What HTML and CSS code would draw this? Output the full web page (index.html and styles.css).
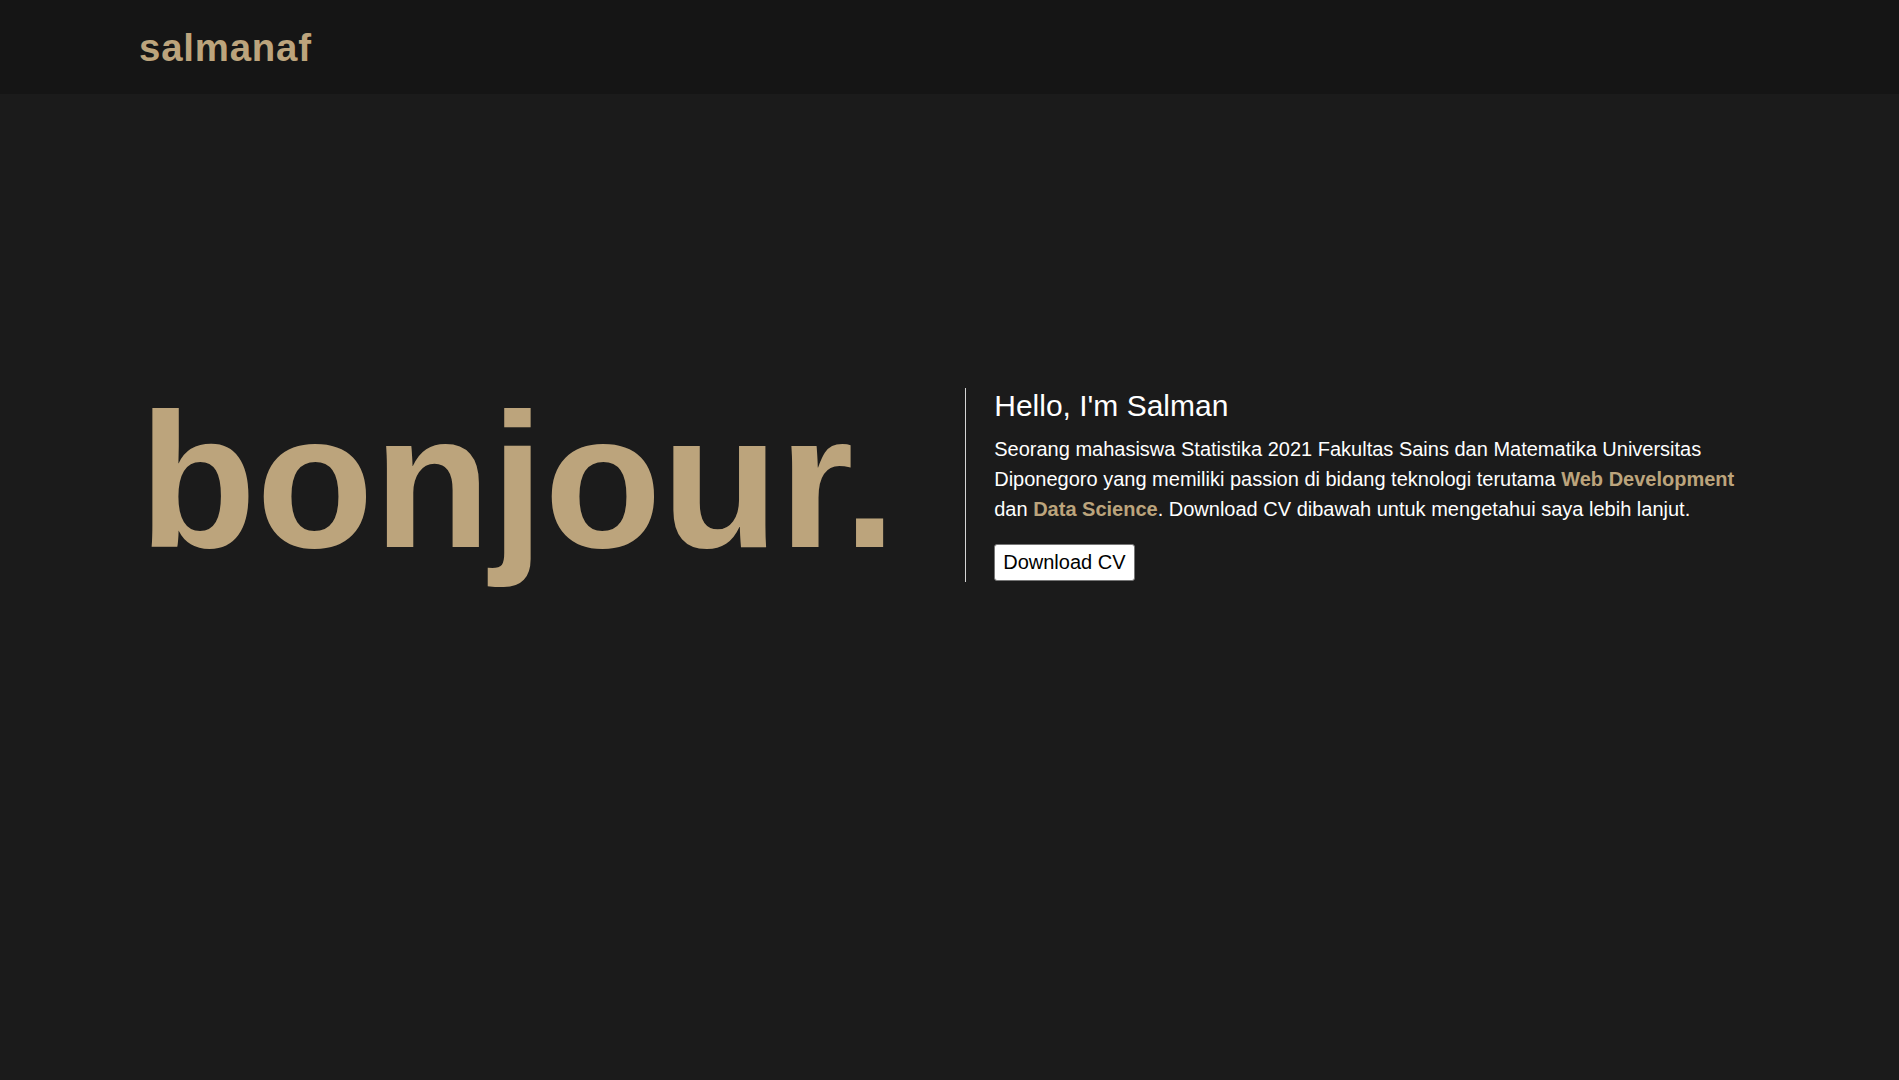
FILE: index.html
```html
<!DOCTYPE html>
<html lang="id">
<head>
<meta charset="utf-8">
<title>salmanaf</title>
<link rel="stylesheet" href="styles.css">
</head>
<body>
<header class="navbar">
  <div class="container">
    <a class="logo" href="#">salmanaf</a>
  </div>
</header>
<main class="hero">
  <div class="container hero-row">
    <h1 class="greeting">bonjour.</h1>
    <div class="intro">
      <h2 class="intro-title">Hello, I'm Salman</h2>
      <p class="intro-text">Seorang mahasiswa Statistika 2021 Fakultas Sains dan Matematika Universitas Diponegoro yang memiliki passion di bidang teknologi terutama <strong class="accent">Web Development</strong> dan <strong class="accent">Data Science</strong>. Download CV dibawah untuk mengetahui saya lebih lanjut.</p>
      <button class="btn" type="button">Download CV</button>
    </div>
  </div>
</main>
</body>
</html>
```
FILE: styles.css
```css
* { box-sizing: border-box; }

html, body {
  margin: 0;
  padding: 0;
}

body {
  background: #1b1b1b;
  color: #ffffff;
  font-family: "Liberation Sans", Arial, sans-serif;
  min-height: 100vh;
}

.container {
  padding: 0 139px;
}

.navbar {
  background: #151515;
  height: 94px;
  padding-top: 26px;
}

.logo {
  color: #bca47c;
  font-weight: 700;
  font-size: 38.4px;
  letter-spacing: 0.8px;
  text-decoration: none;
  display: inline-block;
}

.hero {
  padding-top: 276px;
}

.hero-row {
  display: flex;
  align-items: flex-start;
  gap: 69px;
}

.greeting {
  margin: 0;
  font-size: 192px;
  font-weight: 700;
  color: #bca47c;
  line-height: normal;
  white-space: nowrap;
}

.intro {
  flex: 1;
  margin-top: 18px;
  border-left: 1px solid #d4d4d4;
  padding: 1px 0 1px 28px;
}

.intro-title {
  margin: 0 0 11px;
  font-size: 30px;
  font-weight: 400;
  line-height: normal;
}

.intro-text {
  margin: 0 0 20px;
  font-size: 20px;
  line-height: 30px;
}

.accent {
  color: #bca47c;
  font-weight: 700;
}

.btn {
  font-family: "Liberation Sans", Arial, sans-serif;
  font-size: 20px;
  color: #000;
  background: #ffffff;
  border: 1px solid #767676;
  border-radius: 3px;
  padding: 6px 8px;
  line-height: 23px;
  height: 37px;
  display: block;
}
```
